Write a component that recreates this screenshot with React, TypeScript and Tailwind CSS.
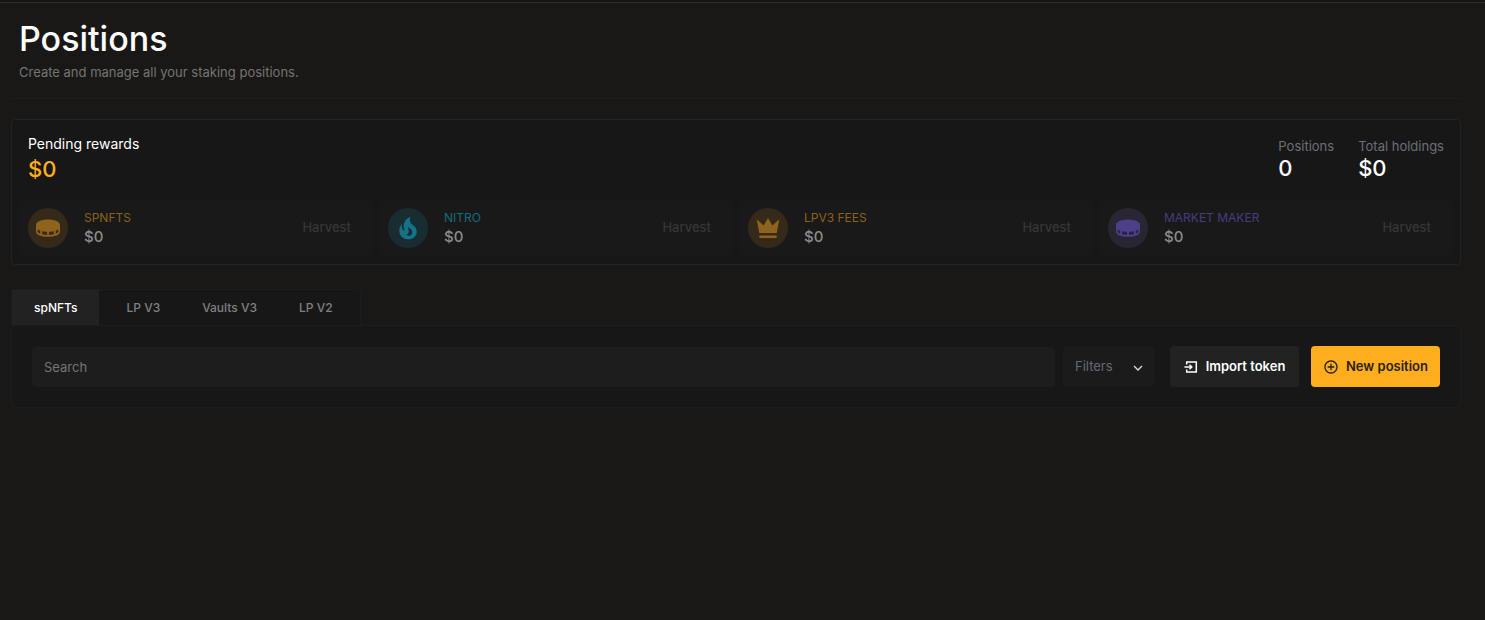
import { useState } from "react";
import { MdAddCircleOutline } from "react-icons/md";

interface Reward {
  name: string;
  amount: string;
  icon: React.ReactNode;
  textColor: string;
  circle: string;
}

const PuckIcon = () => (
  <svg viewBox="0 0 24 24" className="size-6" fill="currentColor" fillRule="evenodd" aria-hidden="true">
    <path d="M12 3.400C5.500 3.400 0 5.500 0 8.800v6.400c0 3.700 5.500 5.600 12 5.600s12-1.900 12-5.600V8.800c0-3.300-5.500-5.400-12-5.400ZM1.700 13.400l2.500 1.400v2.800C2.500 17 1.700 16.300 1.700 15.500ZM6.200 15.300l4.800.7v2.900l-4.800-.7ZM13 16l4.800-.7v2.900l-4.800.7ZM19.800 14.800l2.500-1.400v2.100c0 .8-.8 1.500-2.500 2.100Z" />
  </svg>
);

const FireIcon = () => (
  <svg viewBox="0 0 24 24" className="size-[30px]" fill="currentColor" aria-hidden="true">
    <path d="M17.66 11.2C17.43 10.9 17.15 10.64 16.89 10.38C16.22 9.78 15.46 9.35 14.82 8.72C13.33 7.26 13 4.85 13.95 3C13 3.23 12.17 3.75 11.46 4.32C8.87 6.4 7.85 10.07 9.07 13.22C9.11 13.32 9.15 13.42 9.15 13.55C9.15 13.77 9 13.97 8.8 14.05C8.57 14.15 8.33 14.09 8.14 13.93C8.08 13.88 8.04 13.83 8 13.76C6.87 12.33 6.69 10.28 7.45 8.64C5.78 10 4.87 12.3 5 14.47C5.06 14.97 5.12 15.47 5.29 15.97C5.43 16.57 5.7 17.17 6 17.7C7.08 19.43 8.95 20.67 10.96 20.92C13.1 21.19 15.39 20.8 17.03 19.32C18.86 17.66 19.5 15 18.56 12.72L18.43 12.46C18.22 12 17.66 11.2 17.66 11.2M14.5 17.5C14.22 17.74 13.76 18 13.4 18.1C12.28 18.5 11.16 17.94 10.5 17.28C11.69 17 12.4 16.12 12.61 15.23C12.78 14.43 12.46 13.77 12.33 13C12.21 12.26 12.23 11.63 12.5 10.94C12.69 11.32 12.89 11.7 13.13 12C13.9 13 15.11 13.44 15.37 14.8C15.41 14.94 15.43 15.08 15.43 15.23C15.46 16.05 15.1 16.95 14.5 17.5Z" />
  </svg>
);

const CrownIcon = () => (
  <svg viewBox="0 0 24 24" className="size-[30px]" fill="currentColor" aria-hidden="true">
    <path d="M5 16 3 5l5.500 5L12 4l3.500 6L21 5l-2 11H5m14 3c0 .6-.4 1-1 1H6c-.6 0-1-.4-1-1v-1h14v1Z" />
  </svg>
);

const ImportIcon = () => (
  <svg viewBox="0 0 14 14" className="size-3.5" fill="none" stroke="currentColor" strokeWidth="1.5" aria-hidden="true">
    <path d="M2.700 4.500V1.900h9.600v10.200H2.700V9.500M0.500 7h7M5.500 4.700 7.800 7 5.500 9.300" />
  </svg>
);

const rewards: Reward[] = [
  { name: "SPNFTS", amount: "$0", icon: <PuckIcon />, textColor: "text-[#8c611b]", circle: "bg-[#352a19] text-[#8f631b]" },
  { name: "NITRO", amount: "$0", icon: <FireIcon />, textColor: "text-[#156b7d]", circle: "bg-[#182c31] text-[#14738a]" },
  { name: "LPV3 FEES", amount: "$0", icon: <CrownIcon />, textColor: "text-[#8c611b]", circle: "bg-[#352a19] text-[#8f631b]" },
  { name: "MARKET MAKER", amount: "$0", icon: <PuckIcon />, textColor: "text-[#493b81]", circle: "bg-[#292533] text-[#4e3f8b]" },
];

const tabs = ["spNFTs", "LP V3", "Vaults V3", "LP V2"];

const RewardCard = ({ reward }: { reward: Reward }) => (
  <div className="flex h-14 items-center gap-4 rounded bg-[#191919] pl-2 pr-[21px]">
    <div className={`flex size-10 shrink-0 items-center justify-center rounded-full ${reward.circle}`}>
      {reward.icon}
    </div>
    <div className="flex-1">
      <p className={`text-xs leading-[18px] ${reward.textColor}`}>{reward.name}</p>
      <p className="text-[15px] leading-5 font-medium text-[#8c8c8c]">{reward.amount}</p>
    </div>
    <button type="button" disabled className="text-[13px] font-medium text-[#363636]">
      Harvest
    </button>
  </div>
);

const App = () => {
  const [activeTab, setActiveTab] = useState(tabs[0]);
  const [search, setSearch] = useState("");

  return (
    <div className="min-h-screen border-t-2 border-[#171614] bg-[#191816] font-['Inter',sans-serif] text-white">
      <main className="border-t border-[#2b2b2b] pl-[11px] pr-6">
        <header className="border-b border-[#1d1d1c] px-2 pt-3 pb-[17px]">
          <h1 className="text-[34px] leading-[48px] font-medium">Positions</h1>
          <p className="text-[13px] leading-[18px] text-[#747474]">Create and manage all your staking positions.</p>
        </header>

        <section className="mt-5 rounded border border-[#232323] bg-[#171717] px-2 pb-2">
          <div className="flex items-start justify-between px-2 pt-3.5">
            <div>
              <h2 className="text-sm leading-5">Pending rewards</h2>
              <p className="text-[22px] leading-[30px] font-medium text-[#ffaf1d]">$0</p>
            </div>
            <dl className="flex gap-6 pt-0.5">
              <div>
                <dt className="text-[13px] leading-5 text-[#6b7078]">Positions</dt>
                <dd className="text-[22px] leading-6 font-medium">0</dd>
              </div>
              <div>
                <dt className="text-[13px] leading-5 text-[#6b7078]">Total holdings</dt>
                <dd className="text-[22px] leading-6 font-medium">$0</dd>
              </div>
            </dl>
          </div>
          <div className="mt-4 grid grid-cols-4 gap-2">
            {rewards.map((reward) => (
              <RewardCard key={reward.name} reward={reward} />
            ))}
          </div>
        </section>

        <div className="mt-6 flex">
          <div role="tablist" className="flex h-9 w-[350px] rounded-t border border-b-0 border-[#1d1d1d] bg-[#171717]">
            {tabs.map((tab) => (
              <button
                key={tab}
                type="button"
                role="tab"
                aria-selected={activeTab === tab}
                onClick={() => setActiveTab(tab)}
                className={`cursor-pointer text-xs font-medium ${
                  activeTab === tab ? "mr-1.5 bg-[#222222] px-[22px] text-white" : "px-[21px] text-[#808080]"
                }`}
              >
                {tab}
              </button>
            ))}
          </div>
        </div>
        <section className="flex items-center rounded border border-[#1d1d1d] bg-[#171717] p-5">
          <input
            type="text"
            aria-label="Search"
            placeholder="Search"
            value={search}
            onChange={(e) => setSearch(e.target.value)}
            className="h-10 min-w-0 flex-1 rounded bg-[#1d1d1d] px-3 text-[13px] outline-none placeholder:text-[#757575]"
          />
          <div className="relative ml-2">
            <select
              aria-label="Filters"
              className="h-10 w-[91px] appearance-none rounded bg-[#1b1b1b] px-3 text-[13px] text-[#646a73]"
            >
              <option>Filters</option>
            </select>
            <svg
              viewBox="0 0 10 6"
              className="pointer-events-none absolute top-[18px] right-[11px] h-1.5 w-2.5 text-[#d6deeb]"
              fill="none"
              stroke="currentColor"
              strokeWidth="1.3"
              aria-hidden="true"
            >
              <path d="m1 1 4 4 4-4" />
            </svg>
          </div>
          <button
            type="button"
            className="ml-4 flex h-[41px] w-[129px] cursor-pointer items-center justify-center gap-2 rounded bg-[#222222] text-[13px] font-semibold whitespace-nowrap"
          >
            <ImportIcon />
            Import token
          </button>
          <button
            type="button"
            className="ml-3 flex h-[41px] w-[129px] cursor-pointer items-center justify-center gap-[7px] rounded bg-[#ffaf1d] text-[13px] font-semibold whitespace-nowrap text-[#29200f]"
          >
            <MdAddCircleOutline className="size-4" />
            New position
          </button>
        </section>
      </main>
    </div>
  );
};

export default App;
